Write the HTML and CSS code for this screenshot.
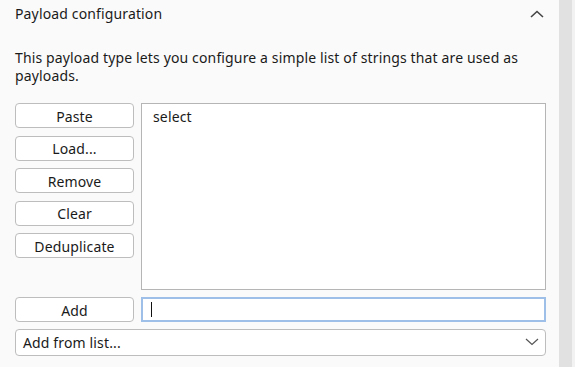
FILE: index.html
```html
<!DOCTYPE html>
<html lang="en">
<head>
  <meta charset="UTF-8">
  <meta name="viewport" content="width=device-width, initial-scale=1.0">
  <title>Payload configuration</title>

  <link rel="stylesheet" href="styles.css">
</head>
<body>
  <div id="page">
    <div id="panel">
      <div class="head">
        <span class="title">Payload configuration</span>
        <svg class="chev" width="14" height="8" viewBox="0 0 14 8">
          <path d="M1 7 L7 1.5 L13 7" fill="none" stroke="#444" stroke-width="1.6"/>
        </svg>
      </div>

      <p class="desc">This payload type lets you configure a simple list of strings that are used as payloads.</p>

      <div class="editor">
        <div class="btns">
          <button class="btn">Paste</button>
          <button class="btn">Load...</button>
          <button class="btn">Remove</button>
          <button class="btn">Clear</button>
          <button class="btn">Deduplicate</button>
        </div>
        <div class="list">
          <div class="item">select</div>
        </div>

        <button class="btn">Add</button>
        <div class="input"><span class="caret"></span></div>
      </div>

      <div class="select">
        <span>Add from list...</span>
        <svg width="14" height="8" viewBox="0 0 14 8">
          <path d="M1 1 L7 6.5 L13 1" fill="none" stroke="#555" stroke-width="1.2"/>
        </svg>
      </div>
    </div>

    <div id="scroll">
      <div class="track"></div>
      <div class="edge"></div>
    </div>
  </div>
</body>
</html>
```

FILE: styles.css
```css
*{
  box-sizing: border-box;
}

body{
  margin: 0;
  font-family: "Noto Sans", "Open Sans", sans-serif;
  font-size: 14px;
  letter-spacing: 0.14px;
  color: #1a1a1a;
  background: #fafafa;
}

#page{
  display: flex;
  height: 367px;
  overflow: hidden;
}

#panel{
  width: 559px;
  padding: 0 13px 0 15px;
  background: #fafafa;
}

.head{
  display: flex;
  justify-content: space-between;
  align-items: center;
  height: 27px;
  padding-right: 2px;
}

.desc{
  margin: 22px 0 0;
  line-height: 18px;
}

.editor{
  display: grid;
  grid-template-columns: 119px 1fr;
  column-gap: 7px;
  row-gap: 7px;
  margin-top: 18px;
}

.btns{
  display: flex;
  flex-direction: column;
  gap: 7.5px;
}

.btn{
  height: 25px;
  padding: 1px 0 0;
  font-family: inherit;
  font-size: 14px;
  letter-spacing: 0.14px;
  color: #1a1a1a;
  background: #fff;
  border: 1px solid #bdbdbd;
  border-radius: 4px;
}

.list{
  height: 187px;
  padding: 3px 11px;
  background: #fff;
  border: 1px solid #b5b5b5;
}

.input{
  display: flex;
  align-items: center;
  height: 25px;
  padding-left: 8px;
  background: #fff;
  border: 2px solid #9dbfe8;
}

.caret{
  width: 1px;
  height: 15px;
  background: #111;
}

.select{
  display: flex;
  justify-content: space-between;
  align-items: center;
  height: 27px;
  margin-top: 7px;
  padding: 0 6px 1px 7px;
  background: #fff;
  border: 1px solid #bdbdbd;
  border-radius: 4px;
}

#scroll{
  display: flex;
  flex: 1;
}

.track{
  width: 13px;
  background: #e1e1e1;
}

.edge{
  flex: 1;
  background: #f2f2f2;
}
```
